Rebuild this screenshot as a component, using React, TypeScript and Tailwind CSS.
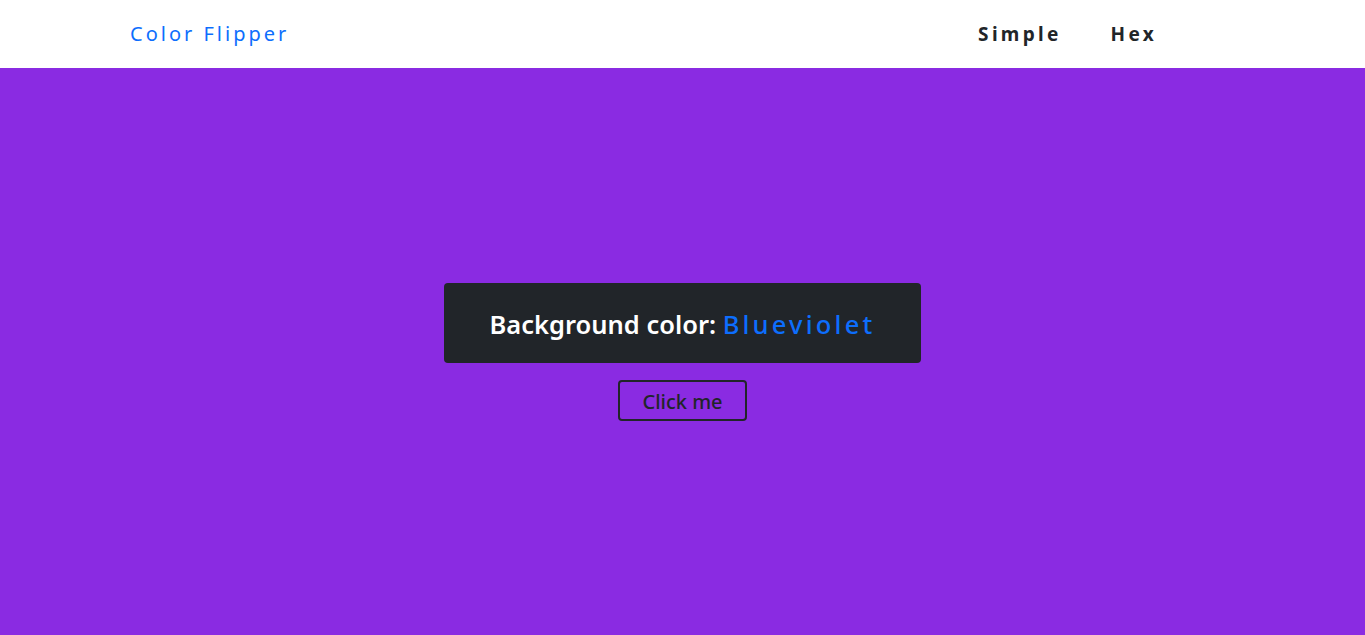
export default function App() {
  return (
    <div className="flex min-h-screen flex-col bg-[#8a2be2] font-['Noto_Sans',sans-serif]">
      {/* navbar */}
      <nav className="flex h-[68px] items-center justify-between bg-white pl-[130px] pr-[208px]">
        <a className="text-[20px] tracking-[3px] text-[#0d6efd]">Color Flipper</a>
        <ul className="flex items-center gap-[49px]">
          <li className="text-[19px] font-bold tracking-[3.3px] text-[#212529]">Simple</li>
          <li className="text-[19px] font-bold tracking-[3.3px] text-[#212529]">Hex</li>
        </ul>
      </nav>

      <main className="flex flex-1 flex-col items-center justify-center">
        <div className="flex h-[80px] w-[477px] items-center justify-center rounded-[4px] bg-[#212529] pt-[4px]">
          <h2 className="text-[25.5px] font-semibold text-white">
            Background color: <span className="font-medium tracking-[3.2px] text-[#0d6efd]">Blueviolet</span>
          </h2>
        </div>
        <button className="mt-[17px] flex h-[41px] w-[129px] items-center justify-center rounded-[4px] border-2 border-[#212529] pt-[3px] text-[20px] font-medium text-[#212529]">
          Click me
        </button>
      </main>
    </div>
  );
}
